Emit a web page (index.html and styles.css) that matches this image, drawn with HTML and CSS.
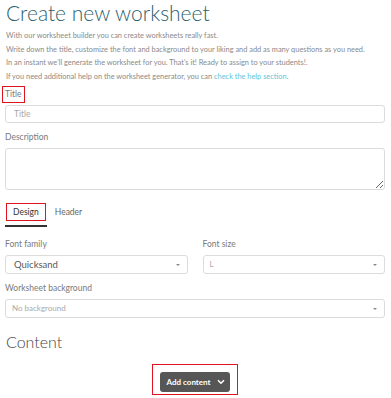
FILE: index.html
```html
<!DOCTYPE html>
<html lang="en">
<head>
    <meta charset="UTF-8">
    <title>Create new worksheet</title>
    <link rel="stylesheet" href="styles.css">
</head>
<body>
    <div class="page">
        <h1 class="page-title">Create new worksheet</h1>
        <div class="intro">
            <p>With our worksheet builder you can create worksheets really fast.</p>
            <p>Write down the title, customize the font and background to your liking and add as many questions as you need.</p>
            <p>In an instant we'll generate the worksheet for you. That's it! Ready to assign to your students!.</p>
            <p>If you need additional help on the worksheet generator, you can <a href="#">check the help section</a>.</p>
        </div>

        <div class="field">
            <label class="label first marked">Title</label>
            <input class="input" type="text" placeholder="Title">
        </div>
        <div class="field">
            <label class="label">Description</label>
            <textarea class="textarea"></textarea>
        </div>

        <div class="tabs">
            <div class="tab active"><span class="marked">Design</span></div>
            <div class="tab">Header</div>
        </div>

        <div class="row">
            <div class="field">
                <label class="label">Font family</label>
                <div class="select">Quicksand<span class="caret"></span></div>
            </div>
            <div class="field">
                <label class="label">Font size</label>
                <div class="select muted">L<span class="caret"></span></div>
            </div>
        </div>
        <div class="field">
            <label class="label">Worksheet background</label>
            <div class="select muted">No background<span class="caret"></span></div>
        </div>

        <h2 class="section-title">Content</h2>
        <div class="actions">
            <div class="marked-box">
                <button class="add-button">Add content
                    <svg width="8" height="6" viewBox="0 0 8 6"><path d="M1 1.2 L4 4.2 L7 1.2" fill="none" stroke="#fff" stroke-width="1.6"/></svg>
                </button>
            </div>
        </div>
    </div>
</body>
</html>
```

FILE: styles.css
```css
body, html {
    margin: 0;
    padding: 0;
    background: #fff;
    font-family: 'Lato', sans-serif;
}

.page {
    padding: 0 6px 0 5px;
}

.page-title {
    font-size: 21px;
    font-weight: 300;
    color: #2d5f6d;
    margin: -2px 0 2px;
    line-height: 29px;
    padding-left: 1px;
}

.intro {
    font-size: 7.4px;
    color: #8a8a8a;
    padding-left: 1px;
    white-space: nowrap;
}

.intro p {
    margin: 0;
    line-height: 13.5px;
}

.intro a {
    color: #62c3d6;
    text-decoration: none;
}

.field {
    display: flex;
    flex-direction: column;
}

.label {
    font-size: 8.5px;
    color: #7a7a7a;
    line-height: 15px;
    margin: 7px 0 3px;
}

.label.first {
    margin-top: 3.5px;
}

.marked {
    align-self: flex-start;
    outline: 1.5px solid #e0141e;
    padding: 0 2px;
    margin-left: -2px;
}

.input, .textarea, .select {
    box-sizing: border-box;
    width: 100%;
    border: 1px solid #dcdcdc;
    border-radius: 3px;
    font-family: inherit;
    background: #fff;
    margin: 0;
}

.input {
    height: 18px;
    font-size: 8.5px;
    padding: 0 8px;
}

.input::placeholder {
    color: #a8a8a8;
}

.textarea {
    height: 42px;
    resize: vertical;
    display: block;
}

.tabs {
    display: flex;
    gap: 8px;
    margin-top: 12px;
}

.tab {
    font-size: 8.5px;
    color: #666;
    padding: 4px 0 7px;
    line-height: 12px;
}

.tab.active {
    color: #333;
    border-bottom: 2px solid #333;
    padding-left: 8px;
    padding-right: 8px;
}

.tab.active .marked {
    padding: 3px 6px;
    margin-left: -6px;
    margin-right: -6px;
}

.row {
    display: grid;
    grid-template-columns: 1fr 1fr;
    gap: 15px;
    margin-top: 3px;
}

.select {
    position: relative;
    height: 19px;
    line-height: 17px;
    padding: 0 8px;
    font-size: 9.5px;
    font-weight: 400;
    color: #595959;
}

.select.muted {
    color: #aaa;
    font-size: 8px;
    padding-left: 6px;
}

.caret {
    position: absolute;
    right: 7px;
    top: 8px;
    border-left: 2.5px solid transparent;
    border-right: 2.5px solid transparent;
    border-top: 2.5px solid #888;
}

.section-title {
    font-size: 16px;
    font-weight: 300;
    color: #444;
    margin: 13.5px 0 0;
    line-height: 22px;
    padding-left: 1px;
}

.actions {
    display: flex;
    justify-content: center;
    margin-top: 11px;
}

.marked-box {
    border: 1.5px solid #e0141e;
    padding: 7px 7px 2px 7px;
}

.add-button {
    background: #565656;
    color: #fff;
    border: none;
    border-radius: 3px;
    height: 20px;
    padding: 0 5px 0 7px;
    font-family: inherit;
    font-size: 8px;
    font-weight: 700;
    display: flex;
    align-items: center;
    gap: 7px;
}
```
